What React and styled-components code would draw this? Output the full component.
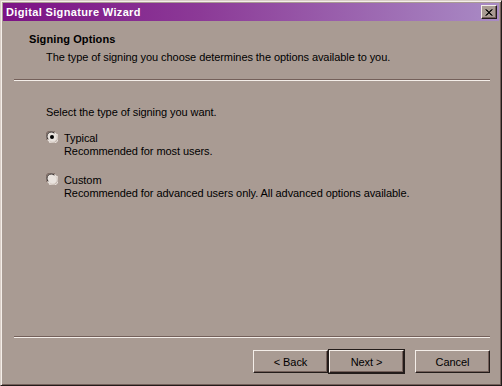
import React from "react";
import styled, { createGlobalStyle } from "styled-components";

const Global = createGlobalStyle`
  html, body { margin: 0; padding: 0; background: #a99b93; }
  * { box-sizing: border-box; }
`;

const FACE = "#a99b93";
const LIGHT = "#d9cec7";
const HILITE = "#f4eee9";
const SHADOW = "#74605a";
const DARK = "#231c1a";

const Window = styled.div`
  width: 502px;
  height: 386px;
  background: ${FACE};
  border-top: 1px solid ${LIGHT};
  border-left: 1px solid ${LIGHT};
  border-right: 1px solid ${DARK};
  border-bottom: 1px solid ${DARK};
  box-shadow: inset 1px 1px 0 ${HILITE}, inset -1px -1px 0 ${SHADOW};
  padding: 2px;
  display: flex;
  flex-direction: column;
  font-family: "Liberation Sans", Arial, sans-serif;
  font-size: 11px;
  letter-spacing: -0.07px;
  color: #000;
`;

const TitleBar = styled.div`
  height: 18px;
  flex: none;
  background: linear-gradient(to right, #7c1285 0%, #8c3a97 40%, #a98bc5 100%);
  display: flex;
  align-items: center;
  justify-content: space-between;
  padding: 0 2px 0 3px;
`;

const TitleText = styled.span`
  color: #fff;
  font-weight: bold;
  font-size: 11px;
  letter-spacing: 0.35px;
`;

const CloseButton = styled.div`
  width: 16px;
  height: 14px;
  background: ${FACE};
  border-top: 1px solid ${HILITE};
  border-left: 1px solid ${HILITE};
  border-right: 1px solid ${DARK};
  border-bottom: 1px solid ${DARK};
  box-shadow: inset -1px -1px 0 ${SHADOW};
  display: flex;
  align-items: center;
  justify-content: center;
`;

const Main = styled.div`
  flex: 1;
  display: flex;
  flex-direction: column;
`;

const Header = styled.div`
  padding: 12px 0 0 26px;
  height: 58px;
`;

const HeaderTitle = styled.div`
  font-weight: bold;
  line-height: 13px;
  letter-spacing: 0.1px;
`;

const HeaderSub = styled.div`
  line-height: 13px;
  margin-top: 5px;
  padding-left: 17px;
`;

const Separator = styled.div`
  height: 2px;
  margin: 0 9px 0 11px;
  border-top: 1px solid ${SHADOW};
  border-bottom: 1px solid ${HILITE};
  flex: none;
`;

const Body = styled.div`
  padding: 25px 0 0 43px;
  display: flex;
  flex-direction: column;
`;

const Prompt = styled.div`
  line-height: 13px;
  margin-bottom: 12px;
`;

const Option = styled.div`
  display: flex;
  gap: 6px;
  margin-bottom: ${(p) => p.$gap}px;
`;

const OptionText = styled.div`
  line-height: 13px;
  padding-top: 1px;
`;

const Footer = styled.div`
  flex: none;
  padding-bottom: 10px;
`;

const ButtonRow = styled.div`
  display: flex;
  justify-content: flex-end;
  padding-right: 9px;
  margin-top: 12px;
`;

const Button = styled.div`
  width: 75px;
  height: 23px;
  display: flex;
  align-items: center;
  justify-content: center;
  background: ${FACE};
  border-top: 1px solid ${HILITE};
  border-left: 1px solid ${HILITE};
  border-right: 1px solid ${DARK};
  border-bottom: 1px solid ${DARK};
  box-shadow: ${(p) =>
    p.$default
      ? `0 0 0 1px ${DARK}, inset -1px -1px 0 ${SHADOW}`
      : `inset -1px -1px 0 ${SHADOW}`};
  margin-left: ${(p) => p.$space}px;
  position: relative;
  z-index: ${(p) => (p.$default ? 1 : 0)};
`;

function Radio({ checked }) {
  return (
    <svg width="12" height="12" viewBox="0 0 12 12" style={{ flex: "none" }}>
      <circle cx="6" cy="6" r="5.5" fill="#e9e3de" stroke="none" />
      <path d="M1.2 9 A5.3 5.3 0 0 1 9 1.2" stroke={SHADOW} strokeWidth="1" fill="none" />
      <path d="M10.8 3 A5.3 5.3 0 0 1 3 10.8" stroke={HILITE} strokeWidth="1" fill="none" />
      <path d="M2.2 8.3 A4.2 4.2 0 0 1 8.3 2.2" stroke={DARK} strokeWidth="1" fill="none" />
      <path d="M9.8 3.7 A4.2 4.2 0 0 1 3.7 9.8" stroke={LIGHT} strokeWidth="1" fill="none" />
      {checked && <circle cx="6" cy="6" r="2" fill="#000" />}
    </svg>
  );
}

export default function App() {
  return (
    <>
      <Global />
      <Window>
        <TitleBar>
          <TitleText>Digital Signature Wizard</TitleText>
          <CloseButton>
            <svg width="8" height="7" viewBox="0 0 8 7">
              <path d="M0.5 0.5 L7.5 6.5 M1.5 0.5 L6.5 6.5 M7.5 0.5 L0.5 6.5 M6.5 0.5 L1.5 6.5" stroke="#000" strokeWidth="1" />
            </svg>
          </CloseButton>
        </TitleBar>
        <Main>
          <Header>
            <HeaderTitle>Signing Options</HeaderTitle>
            <HeaderSub>The type of signing you choose determines the options available to you.</HeaderSub>
          </Header>
          <Separator />
          <Body>
            <Prompt>Select the type of signing you want.</Prompt>
            <Option $gap={15}>
              <Radio checked />
              <OptionText>
                Typical
                <br />
                Recommended for most users.
              </OptionText>
            </Option>
            <Option $gap={0}>
              <Radio />
              <OptionText>
                Custom
                <br />
                Recommended for advanced users only. All advanced options available.
              </OptionText>
            </Option>
          </Body>
        </Main>
        <Footer>
          <Separator />
          <ButtonRow>
            <Button $space={0}>&lt; Back</Button>
            <Button $space={1} $default>Next &gt;</Button>
            <Button $space={11}>Cancel</Button>
          </ButtonRow>
        </Footer>
      </Window>
    </>
  );
}
